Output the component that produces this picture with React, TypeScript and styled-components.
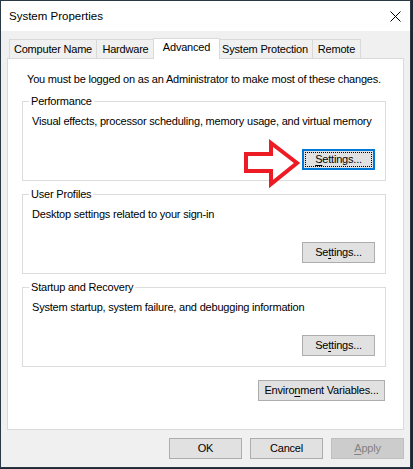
import styled, { createGlobalStyle } from "styled-components";

const GlobalStyle = createGlobalStyle`
  html, body {
    margin: 0;
    padding: 0;
    background: #1e2833;
  }
  body {
    font-family: "Liberation Sans", Arial, sans-serif;
    font-size: 11px;
    letter-spacing: -0.2px;
    color: #000;
  }
`;

const Window = styled.div`
  width: 409px;
  height: 466px;
  border: 1px solid #2b3947;
  background: #f0f0f0;
  display: flex;
  flex-direction: column;
`;

const TitleBar = styled.div`
  height: 30px;
  flex: none;
  background: #fff;
  display: flex;
  align-items: center;
  justify-content: space-between;
  padding: 0 9px 0 8px;
`;

const Title = styled.span`
  font-size: 11.5px;
  letter-spacing: 0;
  line-height: 15px;
  margin-top: 1px;
`;

const Body = styled.div`
  flex: 1;
  display: flex;
  flex-direction: column;
  padding: 7px 6px 0;
`;

const TabStrip = styled.div`
  display: flex;
  align-items: flex-end;
  padding-left: 2px;
  height: 20px;
  position: relative;
  z-index: 1;
`;

const Tab = styled.div<{ $w: number; $active?: boolean }>`
  box-sizing: border-box;
  width: ${(p) => p.$w + (p.$active ? 3 : 0)}px;
  height: ${(p) => (p.$active ? 21 : 19)}px;
  margin: 0 ${(p) => (p.$active ? -2 : 0)}px 0 ${(p) => (p.$active ? -2 : -1)}px;
  margin-bottom: ${(p) => (p.$active ? -1 : 0)}px;
  border: 1px solid #d9d9d9;
  border-bottom: none;
  background: ${(p) => (p.$active ? "#fff" : "#f0f0f0")};
  position: relative;
  z-index: ${(p) => (p.$active ? 2 : 1)};
  display: flex;
  align-items: center;
  justify-content: center;
  line-height: 15px;
  padding-bottom: ${(p) => (p.$active ? 3 : 0)}px;
  white-space: nowrap;

  &:first-child {
    margin-left: 0;
  }
`;

const Panel = styled.div`
  box-sizing: border-box;
  height: 372px;
  flex: none;
  background: #fff;
  border: 1px solid #d9d9d9;
  display: flex;
  flex-direction: column;
  padding: 0 17px 0 14px;
`;

const Notice = styled.p`
  margin: 13px 0 0 5px;
  line-height: 15px;
  white-space: nowrap;
`;

const GroupBox = styled.section<{ $first?: boolean }>`
  box-sizing: border-box;
  height: 80px;
  margin-top: ${(p) => (p.$first ? 14 : 13)}px;
  border: 1px solid #dcdcdc;
  padding: 0 10px 10px 9px;
  display: flex;
  flex-direction: column;
  position: relative;
`;

const GroupLabel = styled.div`
  width: fit-content;
  margin: -8px 0 0 -3px;
  padding: 0 2px;
  background: #fff;
  line-height: 15px;
`;

const GroupText = styled.div`
  margin-top: 5px;
  line-height: 15px;
  white-space: nowrap;
`;

const Button = styled.button<{ $w?: number; $focused?: boolean }>`
  box-sizing: border-box;
  width: ${(p) => p.$w ?? 73}px;
  height: 21px;
  padding: 0;
  font: inherit;
  letter-spacing: inherit;
  line-height: 15px;
  color: #000;
  background: #e1e1e1;
  border: ${(p) => (p.$focused ? "2px solid #0078d7" : "1px solid #adadad")};
  outline: ${(p) => (p.$focused ? "1px dotted #000" : "none")};
  outline-offset: -4px;
  border-radius: 0;
  flex: none;

  &:disabled {
    background: #cccccc;
    border-color: #bfbfbf;
    color: #838383;
  }

  u {
    text-decoration: underline;
    text-underline-offset: 2px;
  }
`;

const GroupButton = styled(Button)`
  margin-top: auto;
  align-self: flex-end;
`;

const EnvButton = styled(Button)`
  margin: 13px 1px 0 0;
  align-self: flex-end;
`;

const Footer = styled.div`
  display: flex;
  justify-content: flex-end;
  gap: 8px;
  margin-top: 8px;
`;

const Arrow = styled.svg`
  position: absolute;
  left: 220px;
  top: 36px;
  width: 60px;
  height: 52px;
  overflow: visible;
`;

function CloseIcon() {
  return (
    <svg width="11" height="11" viewBox="0 0 11 11">
      <path d="M0.5 0.5 L10.5 10.5 M10.5 0.5 L0.5 10.5" stroke="#000" strokeWidth="1" />
    </svg>
  );
}

function Group({
  title,
  text,
  focused,
  first,
  children,
}: {
  title: string;
  text: string;
  focused?: boolean;
  first?: boolean;
  children: React.ReactNode;
}) {
  return (
    <GroupBox $first={first}>
      <GroupLabel>{title}</GroupLabel>
      <GroupText>{text}</GroupText>
      <GroupButton $focused={focused}>{children}</GroupButton>
      {focused && (
        <Arrow viewBox="0 0 60 52">
          <polygon
            points="3,16 28,16 28,5 54,25 28,46 28,33 3,33"
            fill="#fff"
            stroke="#ed1c24"
            strokeWidth="4"
            strokeLinejoin="miter"
          />
        </Arrow>
      )}
    </GroupBox>
  );
}

export default function App() {
  return (
    <>
      <GlobalStyle />
      <Window>
        <TitleBar>
          <Title>System Properties</Title>
          <CloseIcon />
        </TitleBar>
        <Body>
          <TabStrip>
            <Tab $w={88}>Computer Name</Tab>
            <Tab $w={59}>Hardware</Tab>
            <Tab $w={64} $active>
              Advanced
            </Tab>
            <Tab $w={96}>System Protection</Tab>
            <Tab $w={49}>Remote</Tab>
          </TabStrip>
          <Panel>
            <Notice>You must be logged on as an Administrator to make most of these changes.</Notice>
            <Group
              first
              focused
              title="Performance"
              text="Visual effects, processor scheduling, memory usage, and virtual memory"
            >
              <u>S</u>ettings...
            </Group>
            <Group title="User Profiles" text="Desktop settings related to your sign-in">
              Se<u>t</u>tings...
            </Group>
            <Group
              title="Startup and Recovery"
              text="System startup, system failure, and debugging information"
            >
              Se<u>t</u>tings...
            </Group>
            <EnvButton $w={127}>
              Enviro<u>n</u>ment Variables...
            </EnvButton>
          </Panel>
          <Footer>
            <Button>OK</Button>
            <Button>Cancel</Button>
            <Button disabled>
              <u>A</u>pply
            </Button>
          </Footer>
        </Body>
      </Window>
    </>
  );
}
